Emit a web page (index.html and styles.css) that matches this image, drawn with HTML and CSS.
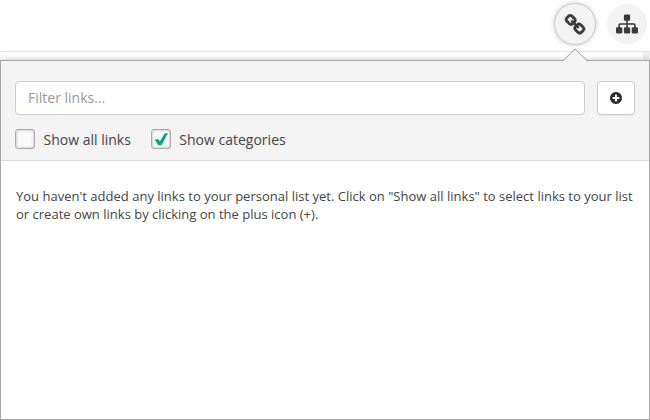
FILE: index.html
```
<!DOCTYPE html>
<html lang="en">
<head>
<meta charset="utf-8">
<title>Links</title>
<link rel="stylesheet" href="styles.css">
</head>
<body>
<header class="topbar">
  <button class="round active" aria-label="Links"><svg viewBox="0 0 1792 1792"><path d="M1520 1216q0-40-28-68l-208-208q-28-28-68-28-42 0-72 32 3 3 19 18.500t21.500 21.500 15 19 13 25.500 3.500 27.500q0 40-28 68t-68 28q-15 0-27.500-3.500t-25.500-13-19-15-21.500-21.500-18.500-19q-33 31-33 73 0 40 28 68l206 207q27 27 68 27 40 0 68-26l147-146q28-28 28-67zm-703-705q0-40-28-68l-206-207q-28-28-68-28-39 0-68 27l-147 146q-28 28-28 67 0 40 28 68l208 208q27 27 68 27 42 0 72-31-3-3-19-18.500t-21.500-21.500-15-19-13-25.500-3.500-27.500q0-40 28-68t68-28q15 0 27.500 3.500t25.500 13 19 15 21.500 21.500 18.500 19q33-31 33-73zm895 705q0 120-85 203l-147 146q-83 83-203 83-121 0-204-85l-206-207q-83-83-83-203 0-123 88-209l-88-88q-86 88-208 88-120 0-204-84l-208-208q-84-84-84-204t85-203l147-146q83-83 203-83 121 0 204 85l206 207q83 83 83 203 0 123-88 209l88 88q86-88 208-88 120 0 204 84l208 208q84 84 84 204z"/></svg></button>
  <button class="round" aria-label="Sitemap"><svg viewBox="0 0 1792 1792"><path d="M1792 1248v320q0 40-28 68t-68 28h-320q-40 0-68-28t-28-68v-320q0-40 28-68t68-28h96v-192h-512v192h96q40 0 68 28t28 68v320q0 40-28 68t-68 28h-320q-40 0-68-28t-28-68v-320q0-40 28-68t68-28h96v-192h-512v192h96q40 0 68 28t28 68v320q0 40-28 68t-68 28h-320q-40 0-68-28t-28-68v-320q0-40 28-68t68-28h96v-192q0-52 38-90t90-38h512v-192h-96q-40 0-68-28t-28-68v-320q0-40 28-68t68-28h320q40 0 68 28t28 68v320q0 40-28 68t-68 28h-96v192h512q52 0 90 38t38 90v192h96q40 0 68 28t28 68z"/></svg></button>
</header>
<div class="strip"></div>
<main class="panel">
  <svg class="arrow" viewBox="0 0 26 14"><path class="arrow-fill" d="M0 14V13.500L13 .7 26 13.500V14z"/><path class="arrow-line" d="M.5 13.200L13 .9 25.500 13.200"/></svg>
  <section class="tools">
    <div class="row">
      <input class="filter" type="text" placeholder="Filter links...">
      <button class="add" aria-label="Add link"><svg viewBox="0 0 1792 1792"><path d="M1344 960v-128q0-26-19-45t-45-19h-256v-256q0-26-19-45t-45-19h-128q-26 0-45 19t-19 45v256h-256q-26 0-45 19t-19 45v128q0 26 19 45t45 19h256v256q0 26 19 45t45 19h128q26 0 45-19t19-45v-256h256q26 0 45-19t19-45zm320-64q0 209-103 385.500t-279.500 279.500-385.500 103-385.500-103-279.500-279.500-103-385.500 103-385.500 279.500-279.500 385.500-103 385.500 103 279.500 279.500 103 385.500z"/></svg></button>
    </div>
    <div class="checks">
      <label class="check"><span class="box"></span><span class="label">Show all links</span></label>
      <label class="check"><span class="box"><svg viewBox="0 0 18 18"><path d="M2.800 9.900L6 8.700 7.900 11.300 12.800 3.200H16L9.500 15.200H6.300z"/></svg></span><span class="label">Show categories</span></label>
    </div>
  </section>
  <p class="message">You haven't added any links to your personal list yet. Click on "Show all links" to select links to your list<br>or create own links by clicking on the plus icon (+).</p>
</main>
</body>
</html>
```
FILE: styles.css
```
* { box-sizing: border-box; }
body {
  margin: 0;
  width: 650px;
  height: 420px;
  overflow: hidden;
  background: #fff;
  color: #444;
  font: 14px/20px "Open Sans", sans-serif;
}
svg { display: block; fill: #3a3a3a; }
.topbar {
  height: 52px;
  padding: 3px 3px 0 0;
  display: flex;
  justify-content: flex-end;
  align-items: flex-start;
  gap: 11px;
  border-bottom: 1px solid #e5e5e5;
}
.strip {
  width: 7px;
  height: 8px;
  margin-left: auto;
  background: #f0f0f0;
}
.round {
  width: 40px;
  height: 40px;
  margin-top: 1px;
  padding: 0;
  display: flex;
  align-items: center;
  justify-content: center;
  border: 0;
  border-radius: 50%;
  background: #f3f3f3;
}
.round svg { width: 22px; height: 22px; }
.round.active {
  width: 42px;
  height: 42px;
  margin-top: 0;
  padding-top: 1px;
  border: 1px solid #ccc;
  box-shadow: 0 0 4px rgba(0, 0, 0, .22);
}
.round.active path { stroke: #3a3a3a; stroke-width: 50; }
.panel {
  position: relative;
  height: 360px;
  border: 1px solid #a6a6a6;
  background: #fff;
  box-shadow: 0 0 6px rgba(0, 0, 0, .25);
}
.arrow {
  position: absolute;
  left: 561px;
  top: -13px;
  width: 26px;
  height: 14px;
}
.arrow-fill { fill: #f3f3f3; }
.arrow-line { fill: none; stroke: #999; stroke-width: 1; }
.tools {
  height: 100px;
  padding: 20px 14px 0;
  background: #f3f3f3;
  border-bottom: 1px solid #d9d9d9;
}
.row { display: flex; gap: 12px; }
.filter {
  flex: 1;
  min-width: 0;
  height: 34px;
  padding: 0 12px 2px;
  border: 1px solid #ccc;
  border-radius: 4px;
  background: #fff;
  font: inherit;
}
.filter::placeholder { color: #999; opacity: 1; }
.add {
  width: 38px;
  height: 34px;
  padding: 0;
  display: flex;
  align-items: center;
  justify-content: center;
  border: 1px solid #ccc;
  border-radius: 4px;
  background: #fff;
  box-shadow: 0 1px 1px rgba(0, 0, 0, .06);
}
.add svg { width: 14px; height: 14px; fill: #2d2d2d; }
.checks { display: flex; gap: 20px; margin-top: 14px; }
.check { display: flex; gap: 8.500px; }
.label { padding-top: 1px; }
.box {
  width: 20px;
  height: 20px;
  border: 1px solid #aaa;
  border-radius: 3px;
  background: #fafafa;
  box-shadow: inset 0 0 3px rgba(0, 0, 0, .3);
}
.box svg { width: 18px; height: 18px; fill: #10a37d; }
.message {
  margin: 26px 15px 0;
  font-size: 13px;
  line-height: 18px;
  letter-spacing: .008px;
  white-space: nowrap;
}
```
